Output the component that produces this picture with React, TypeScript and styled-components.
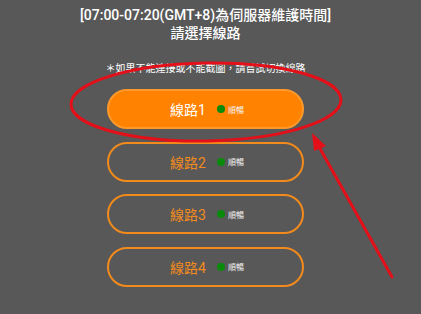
import React from "react";
import styled, { createGlobalStyle } from "styled-components";

const Global = createGlobalStyle`
  html, body { margin: 0; padding: 0; background: #585858; }
  body { font-family: Roboto, "Noto Sans CJK TC", sans-serif; overflow: hidden; }
`;

const Page = styled.div`
  position: relative;
  width: 411px;
  height: 314px;
  display: flex;
  flex-direction: column;
  align-items: center;
  padding-top: 6px;
  box-sizing: border-box;
`;

const Title = styled.div`
  color: #fff;
  font-size: 14px;
  line-height: 18px;
  font-weight: 500;
  text-align: center;
`;

const Note = styled.div`
  margin-top: 20px;
  color: #fff;
  font-size: 10px;
  line-height: 14px;
  text-align: center;
`;

const List = styled.div`
  margin-top: 13px;
  display: flex;
  flex-direction: column;
  gap: 12.5px;
`;

const Line = styled.div<{ $active?: boolean }>`
  width: 197px;
  height: 40px;
  box-sizing: border-box;
  border-radius: 20px;
  border: 2px solid ${(p) => (p.$active ? "#ff9a2a" : "#f28a1c")};
  background: ${(p) => (p.$active ? "#ff8200" : "transparent")};
  display: flex;
  align-items: center;
  justify-content: center;
  gap: 11px;
  padding-left: 3px;
`;

const Name = styled.span<{ $active?: boolean }>`
  font-size: 14px;
  color: ${(p) => (p.$active ? "#fff" : "#f28a1c")};
`;

const Status = styled.span`
  display: flex;
  align-items: center;
  gap: 3px;
  font-size: 8px;
  color: #f4f4f4;
`;

const Dot = styled.span`
  width: 8px;
  height: 8px;
  border-radius: 50%;
  background: #0a8a0a;
`;

const Overlay = styled.svg`
  position: absolute;
  left: 0;
  top: 0;
  width: 421px;
  height: 314px;
  pointer-events: none;
`;

export default function App() {
  const lines = [1, 2, 3, 4];
  return (
    <>
      <Global />
      <Page>
        <Title>[07:00-07:20(GMT+8)為伺服器維護時間]</Title>
        <Title>請選擇線路</Title>
        <Note>＊如果不能連接或不能截圖，請嘗試切換線路</Note>
        <List>
          {lines.map((n) => (
            <Line key={n} $active={n === 1}>
              <Name $active={n === 1}>線路{n}</Name>
              <Status>
                <Dot />
                順暢
              </Status>
            </Line>
          ))}
        </List>
      </Page>
      <Overlay viewBox="0 0 421 314">
        <ellipse cx="206" cy="102" rx="135" ry="39" fill="none" stroke="#e3101a" strokeWidth="3" transform="rotate(-1 206 102)" />
        <line x1="392" y1="277" x2="318" y2="145" stroke="#e3101a" strokeWidth="3" strokeLinecap="round" />
        <polygon points="312,133 326,146 314,151" fill="#e3101a" />
      </Overlay>
    </>
  );
}
